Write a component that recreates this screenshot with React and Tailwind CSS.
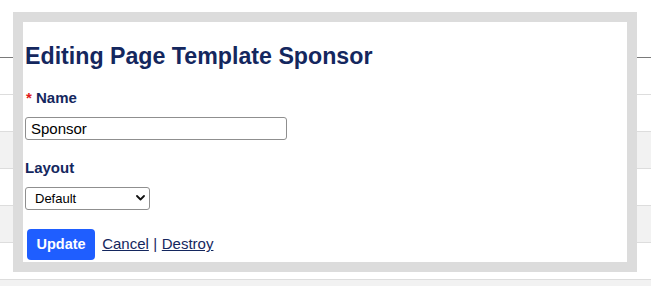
import React from 'react';

const rows = [
  { gray: false },
  { gray: false },
  { gray: true },
  { gray: false },
  { gray: true },
  { gray: false },
  { gray: true },
];

const App = () => {
  return (
    <div className="relative w-[651px] h-[286px] overflow-hidden bg-white font-['Liberation_Sans',Arial,sans-serif]">
      {/* Background table */}
      <div className="h-[57px]"></div>
      <div className="border-t border-[#7a7a7a]">
        {rows.map((row, i) => (
          <div
            key={i}
            className={`h-[37px] border-b border-[#dddddd] ${row.gray ? 'bg-[#f2f2f2]' : 'bg-white'}`}
          ></div>
        ))}
      </div>

      {/* Modal */}
      <div className="absolute left-[13px] top-[12px] w-[624px] border-[10px] border-[#dcdcdc] bg-white">
        <div className="flex flex-col items-start h-[240px] pt-[20px] pl-[2px] pb-[2px]">
          <h1 className="text-[23.2px] leading-[28px] font-bold text-[#14275e]">
            Editing Page Template Sponsor
          </h1>

          <label className="mt-[18px] text-[15px] leading-[20px] font-bold text-[#14275e] pl-[1px]">
            <span className="text-[#e01b1b]">*</span> Name
          </label>
          <input
            type="text"
            defaultValue="Sponsor"
            className="mt-[9px] w-[262px] h-[24px] px-[5px] border border-[#8f8f8f] rounded-[3px] text-[15px] text-black outline-none"
          />

          <label className="mt-[18px] text-[15px] leading-[20px] font-bold text-[#14275e]">
            Layout
          </label>
          <div className="relative mt-[8px]">
            <select
              defaultValue="Default"
              className="appearance-none w-[125px] h-[23px] pl-[9px] border border-[#8f8f8f] rounded-[3px] bg-white text-[13px] text-black outline-none"
            >
              <option>Default</option>
            </select>
            <svg
              className="pointer-events-none absolute left-[111px] top-[9px]"
              width="9"
              height="6"
              viewBox="0 0 9 6"
              fill="none"
            >
              <path d="M1 1L4.5 4.5L8 1" stroke="#111" strokeWidth="1.8" strokeLinecap="round" strokeLinejoin="round" />
            </svg>
          </div>

          <div className="mt-[19px] ml-[2px] flex items-center text-[15px] text-[#14275e]">
            <button className="h-[31px] px-[9.5px] rounded-[4px] bg-[#1f5eff] text-white text-[14.5px] font-bold">
              Update
            </button>
            <a href="#" className="ml-[7px] underline">Cancel</a>
            <span className="mx-[4.5px]">|</span>
            <a href="#" className="underline">Destroy</a>
          </div>
        </div>
      </div>
    </div>
  );
};

export default App;
